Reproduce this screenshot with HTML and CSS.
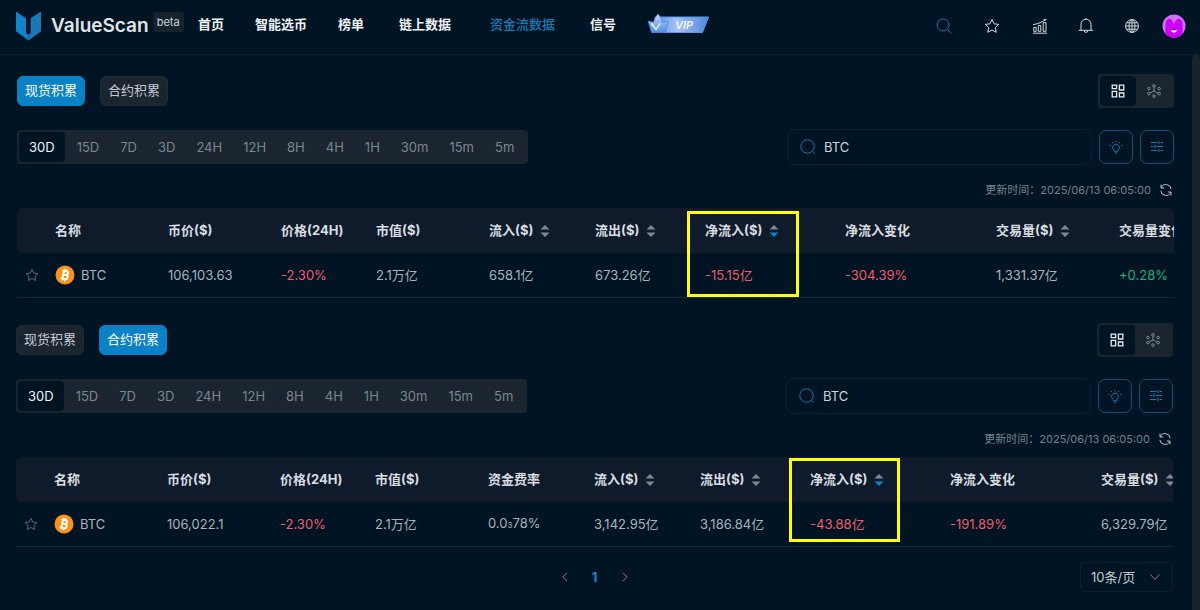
FILE: index.html
```html
<!DOCTYPE html>
<html lang="zh-CN">
<head>
<meta charset="utf-8">
<meta name="viewport" content="width=device-width, initial-scale=1">
<title>ValueScan</title>
<link rel="stylesheet" href="styles.css">
</head>
<body>
<svg class="sprite" aria-hidden="true">
  <symbol id="i-search" viewBox="0 0 16 16"><circle cx="7" cy="7" r="6"/><path d="M11.4 11.4 15.3 15.3"/></symbol>
  <symbol id="i-find" viewBox="0 0 16 16"><circle cx="7.5" cy="7.5" r="6.7"/><path d="M12.4 12.4 14.8 14.6"/></symbol>
  <symbol id="i-star" viewBox="0 0 16 16"><path d="M8 1.5 10 5.8 14.8 6.4 11.3 9.6 12.2 14.3 8 12 3.8 14.3 4.7 9.6 1.2 6.4 6 5.8Z"/></symbol>
  <symbol id="i-chart" viewBox="0 0 16 16"><path d="M1 15.2H15M1.7 9.5H4.2V13.3H1.7ZM6.3 7.5H8.8V13.3H6.3ZM11.2 4.7H14V13.3H11.2ZM1 6.8 5.5 5.6 8.2 4.8 14.2 1.5M11.6 1.6H14.4"/></symbol>
  <symbol id="i-bell" viewBox="0 0 16 16"><path d="M.8 12.3H15.2M3 12V6.2a5 5 0 0 1 10 0V12M6.2 12.6a1.8 1.8 0 0 0 3.6 0M8 1.2V.2"/></symbol>
  <symbol id="i-globe" viewBox="0 0 16 16"><circle cx="8" cy="8" r="6.4"/><ellipse cx="8" cy="8" rx="3" ry="6.4"/><path d="M8 1.6V14.4M1.6 8H14.4M2.6 4.8H13.4M2.6 11.2H13.4"/></symbol>
  <symbol id="i-grid" viewBox="0 0 14 14"><path stroke-width="1.3" d="M1.2 1.2H5.6V4.6H1.2ZM8.4 1.2H12.8V6H8.4ZM1.2 7.4H5.6V12.8H1.2ZM8.4 9H12.8V12.8H8.4Z"/></symbol>
  <symbol id="i-nodes" viewBox="0 0 14 14"><circle cx="7" cy="1.9" r="1.3"/><circle cx="7" cy="12.1" r="1.3"/><circle cx="1.9" cy="4.6" r="1.3"/><circle cx="12.1" cy="4.6" r="1.3"/><circle cx="1.9" cy="9.6" r="1.3"/><circle cx="12.1" cy="9.6" r="1.3"/><path d="M7 3.2V7M7 7 3.2 9M7 7 10.8 9"/></symbol>
  <symbol id="i-bulb" viewBox="0 0 14 14"><path d="M5.4 10.6a3.4 3.4 0 1 1 3.2 0V11.8H5.4ZM6 13.2H8M7 .8V2.4M3.2 2 4 3.3M10.800 2 10 3.300M.4 5.200 1.900 5.800M13.600 5.200 12.100 5.800"/></symbol>
  <symbol id="i-sliders" viewBox="0 0 14 14"><path d="M1 2.5H7.500M10.500 2.500H13M1 6.500H3.500M6.500 6.500H13M1 10.500H7.500M10.500 10.500H13M9 .8V4.200M5 4.800V8.200M9 8.800V12.200"/></symbol>
  <symbol id="i-refresh" viewBox="0 0 14 14"><path d="M2.2 4.8A5.2 5.2 0 0 1 12.2 6.2M11.8 9.2A5.2 5.2 0 0 1 1.8 7.8M2 1.6V5H5.2M12 12.4V9H8.8"/></symbol>
  <symbol id="i-btc" viewBox="0 0 20 20"><circle cx="10" cy="10" r="9.5" fill="#f7931a"/><g transform="rotate(13 10 10)" fill="none" stroke="#fff"><path stroke-width="1.9" d="M6.5 6H10.6a1.9 1.9 0 0 1 0 3.9H8.2M8.2 9.9H11a2.1 2.1 0 0 1 0 4.2H6.5M8.2 6V14"/><path stroke-width="1.2" d="M8.7 3.8V6M11 3.8V6M8.7 14V16.2M11 14V16.2"/></g></symbol>
  <symbol id="i-sort" viewBox="0 0 10 14"><path class="up" d="M5 1 9.5 5.6H.5Z"/><path class="down" d="M5 13 9.5 8.4H.5Z"/></symbol>
  <symbol id="i-left" viewBox="0 0 10 10"><path d="M7 .8 2.8 5 7 9.2"/></symbol>
  <symbol id="i-right" viewBox="0 0 10 10"><path d="M3 .8 7.2 5 3 9.2"/></symbol>
  <symbol id="i-down" viewBox="0 0 12 12"><path d="M1.4 3.6 6 8.4 10.6 3.6"/></symbol>
</svg>

<header class="topbar">
  <a class="brand" href="#">
    <svg class="brand-mark" viewBox="0 0 26 30" aria-hidden="true"><path fill="#1283cb" d="M0 0 10.4 7V21.5Q10.6 23.6 13 23.8V30L0 20.5Z"/><path fill="#1a78b8" d="M26 0 15.2 7V21.5Q15 23.6 13 23.8V30L26 20.5Z"/></svg>
    <span class="brand-name">ValueScan</span>
    <span class="beta">beta</span>
  </a>
  <nav class="nav">
    <a href="#">首页</a>
    <a href="#">智能选币</a>
    <a href="#">榜单</a>
    <a class="nav-chain" href="#">链上数据</a>
    <a class="nav-current" href="#">资金流数据</a>
    <a href="#">信号</a>
    <a class="vip" href="#" aria-label="VIP">
      <svg viewBox="0 0 64 22">
        <defs>
          <linearGradient id="vipbg"><stop offset="0" stop-color="#4f8fe8"/><stop offset=".45" stop-color="#a5c2f7"/><stop offset="1" stop-color="#4e86dc"/></linearGradient>
          <linearGradient id="crown" x2="0" y2="1"><stop offset="0" stop-color="#c5dafb"/><stop offset="1" stop-color="#4d8fe6"/></linearGradient>
        </defs>
        <path fill="url(#vipbg)" stroke="#5c97e9" d="M10 4H61.5L55.5 19.5H5Z"/>
        <path fill="url(#crown)" stroke="#3c7cd4" stroke-width=".7" d="M1 8 6.5 9.2 8 4.5 11 1 14 5 15.5 9.5 21 8.5 18.5 19.5H4.5Z"/>
        <path fill="none" stroke="#fff" stroke-width="1.3" d="M4.5 10.500 9 16.500 13 10.500"/>
        <text x="28" y="16">VIP</text>
      </svg>
    </a>
  </nav>
  <div class="tools">
    <button class="tool tool-active" aria-label="搜索"><svg><use href="#i-search"/></svg></button>
    <button class="tool tool-wide" aria-label="收藏"><svg><use href="#i-star"/></svg></button>
    <button class="tool tool-wide" aria-label="行情"><svg><use href="#i-chart"/></svg></button>
    <button class="tool" aria-label="通知"><svg><use href="#i-bell"/></svg></button>
    <button class="tool" aria-label="语言"><svg><use href="#i-globe"/></svg></button>
    <button class="avatar" aria-label="账户">
      <svg viewBox="0 0 24 24"><defs><clipPath id="face"><circle cx="12" cy="12" r="11.5"/></clipPath></defs><g clip-path="url(#face)"><path fill="#cf70fa" d="M0 0H24V24H0Z"/><path fill="#cc00f8" d="M3.5 24V9Q4.5 5 7.5 4.8 10 5 12 10.5 14 5 16.5 4.8 19.5 5 20.5 9V24Z"/><path fill="#fff" d="M9 15.8Q12 16.8 15 15.8 14.5 18.6 12 18.6 9.5 18.6 9 15.8Z"/><path fill="#7a0096" d="M10.5 15.2H13.5V16.3H10.5Z"/></g></svg>
    </button>
  </div>
</header>

<div class="page">
  <main class="content">
    <section class="panel">
      <div class="row row-tabs">
        <div class="tabs">
          <button class="tab tab-on">现货积累</button>
          <button class="tab">合约积累</button>
        </div>
        <div class="views">
          <button class="view view-on" aria-label="列表"><svg><use href="#i-grid"/></svg></button>
          <button class="view" aria-label="分布"><svg><use href="#i-nodes"/></svg></button>
        </div>
      </div>
      <div class="row row-filter">
        <div class="ranges">
          <button class="range range-on">30D</button><button class="range">15D</button><button class="range">7D</button><button class="range">3D</button><button class="range">24H</button><button class="range">12H</button><button class="range">8H</button><button class="range">4H</button><button class="range">1H</button><button class="range">30m</button><button class="range">15m</button><button class="range">5m</button>
        </div>
        <div class="filters">
          <label class="search"><svg><use href="#i-find"/></svg><input type="text" value="BTC" aria-label="搜索币种"></label>
          <button class="square" aria-label="提示"><svg><use href="#i-bulb"/></svg></button>
          <button class="square" aria-label="筛选"><svg><use href="#i-sliders"/></svg></button>
        </div>
      </div>
      <div class="updated"><span>更新时间：2025/06/13 06:05:00</span><button aria-label="刷新"><svg><use href="#i-refresh"/></svg></button></div>
      <div class="table-wrap">
        <table class="table-spot">
          <colgroup><col class="c-star"><col class="c-113"><col class="c-113"><col class="c-95"><col class="c-113"><col class="c-106"><col class="c-110"><col class="c-140"><col class="c-151"><col class="c-123"><col class="c-140"></colgroup>
          <thead><tr>
            <th></th><th>名称</th><th>币价($)</th><th>价格(24H)</th><th>市值($)</th>
            <th>流入($)<svg class="sort"><use href="#i-sort"/></svg></th>
            <th>流出($)<svg class="sort"><use href="#i-sort"/></svg></th>
            <th class="marked">净流入($)<svg class="sort sort-desc"><use href="#i-sort"/></svg><span class="mark"></span></th>
            <th>净流入变化</th>
            <th>交易量($)<svg class="sort"><use href="#i-sort"/></svg></th>
            <th>交易量变化</th>
          </tr></thead>
          <tbody><tr>
            <td class="fav"><button aria-label="收藏 BTC"><svg><use href="#i-star"/></svg></button></td>
            <td><span class="coin"><svg><use href="#i-btc"/></svg>BTC</span></td>
            <td>106,103.63</td><td class="loss">-2.30%</td><td>2.1万亿</td><td>658.1亿</td><td>673.26亿</td><td class="loss">-15.15亿</td><td class="loss">-304.39%</td><td>1,331.37亿</td><td class="gain">+0.28%</td>
          </tr></tbody>
        </table>
      </div>
    </section>

    <section class="panel">
      <div class="row row-tabs">
        <div class="tabs">
          <button class="tab">现货积累</button>
          <button class="tab tab-on">合约积累</button>
        </div>
        <div class="views">
          <button class="view view-on" aria-label="列表"><svg><use href="#i-grid"/></svg></button>
          <button class="view" aria-label="分布"><svg><use href="#i-nodes"/></svg></button>
        </div>
      </div>
      <div class="row row-filter">
        <div class="ranges">
          <button class="range range-on">30D</button><button class="range">15D</button><button class="range">7D</button><button class="range">3D</button><button class="range">24H</button><button class="range">12H</button><button class="range">8H</button><button class="range">4H</button><button class="range">1H</button><button class="range">30m</button><button class="range">15m</button><button class="range">5m</button>
        </div>
        <div class="filters">
          <label class="search"><svg><use href="#i-find"/></svg><input type="text" value="BTC" aria-label="搜索币种"></label>
          <button class="square" aria-label="提示"><svg><use href="#i-bulb"/></svg></button>
          <button class="square" aria-label="筛选"><svg><use href="#i-sliders"/></svg></button>
        </div>
      </div>
      <div class="updated"><span>更新时间：2025/06/13 06:05:00</span><button aria-label="刷新"><svg><use href="#i-refresh"/></svg></button></div>
      <div class="table-wrap">
        <table class="table-futures">
          <colgroup><col class="c-star"><col class="c-113"><col class="c-113"><col class="c-95"><col class="c-113"><col class="c-106"><col class="c-106"><col class="c-110"><col class="c-140"><col class="c-151"><col class="c-140"></colgroup>
          <thead><tr>
            <th></th><th>名称</th><th>币价($)</th><th>价格(24H)</th><th>市值($)</th><th>资金费率</th>
            <th>流入($)<svg class="sort"><use href="#i-sort"/></svg></th>
            <th>流出($)<svg class="sort"><use href="#i-sort"/></svg></th>
            <th class="marked">净流入($)<svg class="sort sort-desc"><use href="#i-sort"/></svg><span class="mark"></span></th>
            <th>净流入变化</th>
            <th>交易量($)<svg class="sort"><use href="#i-sort"/></svg></th>
          </tr></thead>
          <tbody><tr>
            <td class="fav"><button aria-label="收藏 BTC"><svg><use href="#i-star"/></svg></button></td>
            <td><span class="coin"><svg><use href="#i-btc"/></svg>BTC</span></td>
            <td>106,022.1</td><td class="loss">-2.30%</td><td>2.1万亿</td><td>0.0<small>3</small>78%</td><td>3,142.95亿</td><td>3,186.84亿</td><td class="loss">-43.88亿</td><td class="loss">-191.89%</td><td>6,329.79亿</td>
          </tr></tbody>
        </table>
      </div>
      <div class="paging">
        <div class="pages">
          <button aria-label="上一页"><svg><use href="#i-left"/></svg></button>
          <button class="page-on">1</button>
          <button aria-label="下一页"><svg><use href="#i-right"/></svg></button>
        </div>
        <div class="page-size">
          <select aria-label="每页条数"><option>10条/页</option><option>20条/页</option></select>
          <svg><use href="#i-down"/></svg>
        </div>
      </div>
    </section>
  </main>
  <div class="rail"></div>
</div>
</body>
</html>
```

FILE: styles.css
```css
* { box-sizing: border-box; }

body {
  margin: 0;
  min-height: 100vh;
  display: flex;
  flex-direction: column;
  overflow: hidden;
  background: #001423;
  color: #a9b3bc;
  font: 13px/20px Inter, "Noto Sans CJK SC", sans-serif;
}

button, input, select {
  margin: 0;
  padding: 0;
  border: 0;
  background: none;
  color: inherit;
  font: inherit;
}
button { cursor: pointer; }
a { color: inherit; text-decoration: none; }
svg { display: block; fill: none; stroke: currentColor; }
.sprite { position: absolute; width: 0; height: 0; }

/* Top bar */
.topbar {
  display: flex;
  align-items: center;
  height: 55px;
  padding: 0 14px 2px 16px;
  border-bottom: 1px solid #0b202e;
}
.brand { display: flex; align-items: center; width: 182px; }
.brand-mark { width: 25px; height: 30px; stroke: none; }
.brand-name {
  margin-left: 10px;
  color: #dfe3e6;
  font-size: 19px;
  font-weight: 600;
}
.beta {
  margin: 0 0 9px 4px;
  padding: 0 4px;
  border-radius: 3px;
  background: #16232f;
  color: #cdd3d9;
  font-size: 11px;
}
.nav {
  display: flex;
  align-items: center;
  gap: 31px;
  padding-bottom: 4px;
  color: #eef2f5;
  font-weight: 700;
  white-space: nowrap;
}
.nav-chain { padding-left: 4px; }
.nav-current { padding: 0 4px 0 8px; color: #147db9; font-weight: 500; }
.vip svg { width: 64px; height: 22px; stroke: none; }
.vip text { fill: #f5f9ff; font: italic 600 11px Inter, sans-serif; }

.tools { display: flex; align-items: center; gap: 30px; margin-left: auto; color: #d3d9de; }
.tool svg { width: 16px; height: 16px; }
.tool-active { color: #1379b4; }
.tool-wide { margin-left: 2px; }
.avatar { margin-left: -8px; }
.avatar svg { width: 24px; height: 24px; stroke: none; }

/* Page frame */
.page { display: flex; flex: 1; }
.content { flex: 1; min-width: 0; padding: 19px 18px 0 17px; }
.rail { width: 8px; border-radius: 4px 4px 0 0; background: #1a222d; }
.panel + .panel { margin: 25px 1px 0 -1px; }

.row { display: flex; align-items: center; justify-content: space-between; }
.row-tabs { height: 34px; }
.row-filter { margin-top: 21px; height: 36px; }

.tabs { display: flex; gap: 15px; }
.tab {
  height: 30px;
  padding: 0 7px 2px;
  border: 1px solid #202b36;
  border-radius: 6px;
  background: #1a2530;
  color: #c9cfd5;
}
.tab-on { border-color: #0a82c5; background: #0a82c5; color: #fff; }

.views, .ranges {
  display: flex;
  height: 34px;
  padding: 2px;
  border-radius: 4px;
  background: #1a2530;
}
.view {
  display: grid;
  place-items: center;
  width: 36px;
  border-radius: 4px;
  color: #848c94;
}
.view svg { width: 14px; height: 14px; }
.view-on { background: #001423; color: #e6ebef; }

.ranges { gap: 1px; padding-right: 4px; }
.range { padding: 0 10px; border-radius: 4px; color: #7d868f; }
.range-on { margin-right: 1px; background: #001423; color: #eef2f5; }

.filters { display: flex; align-items: center; gap: 7px; }
.search {
  display: flex;
  align-items: center;
  gap: 8px;
  width: 305px;
  height: 36px;
  padding: 0 12px;
  border: 1px solid #0c2130;
  border-radius: 8px;
}
.search svg { width: 16px; height: 16px; color: #1276b0; }
.search input { flex: 1; min-width: 0; outline: 0; color: #cdd3d8; }
.square {
  display: grid;
  place-items: center;
  width: 34px;
  height: 34px;
  border: 1px solid #0f5079;
  border-radius: 7px;
  color: #1479b5;
}
.square svg { width: 14px; height: 14px; }

.updated {
  display: flex;
  align-items: center;
  justify-content: flex-end;
  gap: 8px;
  height: 18px;
  margin: 16px 1px 9px 0;
  color: #76808a;
  font-size: 11px;
}
.updated svg { width: 14px; height: 14px; color: #b8bfc6; }

/* Tables */
.table-wrap { overflow: hidden; border-radius: 6px 6px 0 0; }
table { width: 1200px; table-layout: fixed; border-collapse: separate; border-spacing: 0; }
th, td { height: 45px; padding: 0 8px; text-align: left; white-space: nowrap; }
th { padding-bottom: 2px; background: #0f1b2a; color: #d9dde1; font-weight: 700; }
th:first-child { border-bottom-left-radius: 6px; }
td { border-bottom: 1px solid #172633; }
.c-star { width: 30px; }
.c-95 { width: 95px; }
.c-106 { width: 106px; }
.c-110 { width: 110px; }
.c-113 { width: 113px; }
.c-123 { width: 123px; }
.c-140 { width: 140px; }
.c-151 { width: 151px; }

.sort {
  --down: #7f8890;
  display: inline-block;
  width: 10px;
  height: 14px;
  margin-left: 7px;
  vertical-align: -3px;
  stroke: none;
}
.sort-desc { --down: #0a84c8; }
.up { fill: #7f8890; }
.down { fill: var(--down); }

.coin { display: flex; align-items: center; gap: 6px; }
.coin svg { width: 20px; height: 20px; stroke: none; }
.fav button { display: block; color: #66717b; }
.fav svg { width: 14px; height: 14px; }
.loss { color: #f05c6a; }
.gain { color: #18b07e; }
td small { font-size: 8px; }

/* Highlight frame laid over the net inflow column */
.marked { position: relative; }
.mark {
  position: absolute;
  z-index: 1;
  top: 3px;
  left: -10px;
  width: 112px;
  height: 86px;
  border: 3px solid #ffff00;
  pointer-events: none;
}
.table-futures .mark { top: 1px; left: -13px; height: 84px; width: 111px; }

/* Paging */
.paging {
  display: grid;
  grid-template-columns: 1fr auto 1fr;
  align-items: center;
  margin-top: 15px;
}
.pages { grid-column: 2; display: flex; gap: 10px; }
.pages button { display: grid; place-items: center; width: 20px; height: 20px; color: #7d868f; }
.pages svg { width: 10px; height: 10px; }
.pages .page-on { color: #1489cb; font-weight: 700; }
.page-size { position: relative; justify-self: end; }
.page-size select {
  width: 93px;
  height: 30px;
  padding: 0 10px;
  border: 1px solid #0b1f2d;
  border-radius: 4px;
  background: #001423;
  color: #c5cbd1;
  appearance: none;
}
.page-size svg { position: absolute; top: 9px; right: 12px; width: 12px; height: 12px; color: #7d868f; pointer-events: none; }
```
